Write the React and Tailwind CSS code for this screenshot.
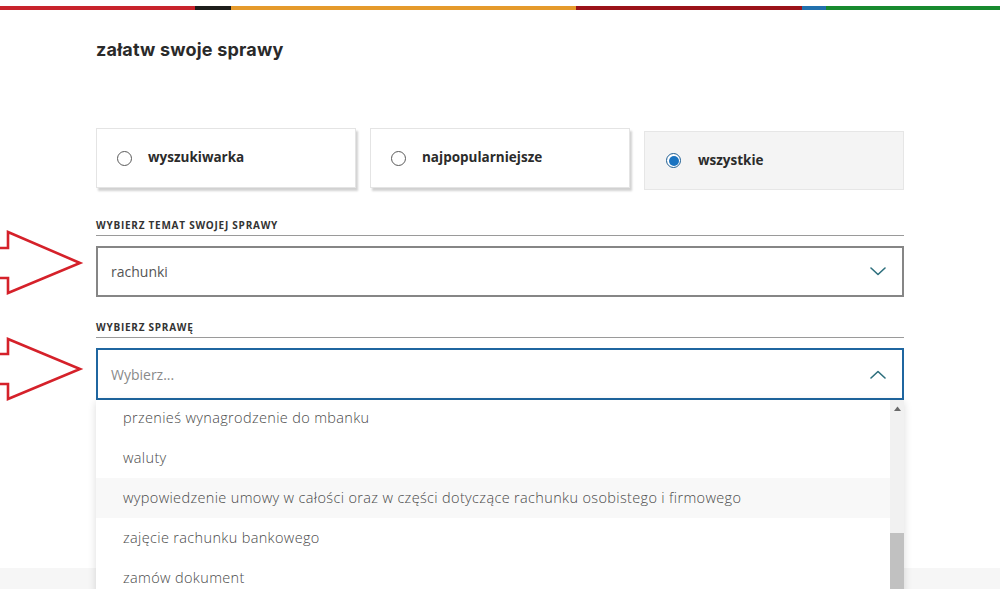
import React from "react";

function Radio({ checked }) {
  if (checked) {
    return (
      <span className="flex h-[15px] w-[15px] shrink-0 items-center justify-center rounded-full border-[1.5px] border-[#1d5d92] bg-white">
        <span className="h-[10px] w-[10px] rounded-full bg-[#1a73c0]" />
      </span>
    );
  }
  return <span className="h-[15px] w-[15px] shrink-0 rounded-full border-[1.5px] border-[#5a5a5a] bg-white" />;
}

function Chevron({ up }) {
  return (
    <svg width="16" height="9" viewBox="0 0 16 9" fill="none" className="shrink-0">
      <path
        d={up ? "M1 8 L8 1.5 L15 8" : "M1 1 L8 7.5 L15 1"}
        stroke="#2d6f7d"
        strokeWidth="1.6"
        strokeLinecap="round"
        strokeLinejoin="round"
      />
    </svg>
  );
}

function Arrow({ d }) {
  return (
    <path d={d} fill="none" stroke="#d5212a" strokeWidth="2.6" strokeLinejoin="miter" />
  );
}

const items = [
  "przenieś wynagrodzenie do mbanku",
  "waluty",
  "wypowiedzenie umowy w całości oraz w części dotyczące rachunku osobistego i firmowego",
  "zajęcie rachunku bankowego",
  "zamów dokument",
];

export default function App() {
  return (
    <div
      className="relative h-[589px] w-[1000px] overflow-hidden bg-white text-[#2b2b2b]"
      style={{ fontFamily: '"Open Sans", "Noto Sans", sans-serif' }}
    >
      {/* top colour bar */}
      <div className="mt-[6px] flex h-[4px] w-full">
        <div className="w-[195px] bg-[#c8232b]" />
        <div className="w-[36px] bg-[#1d1d1b]" />
        <div className="w-[345px] bg-[#e59a2b]" />
        <div className="w-[226px] bg-[#9b1219]" />
        <div className="w-[24px] bg-[#2170ad]" />
        <div className="flex-1 bg-[#178a2e]" />
      </div>

      <div className="px-[96px]">
        <h1
          className="mt-[28px] text-[18px] font-bold leading-6 tracking-[0.2px] text-[#2a2a2a]"
          style={{ fontFamily: "Inter, sans-serif" }}
        >
          załatw swoje sprawy
        </h1>

        {/* tabs */}
        <div className="mt-[66px] grid w-[808px] grid-cols-3 items-start gap-[14px]">
          <div className="flex h-[60px] items-center gap-[16px] border border-[#e4e4e4] bg-white pl-[20px] shadow-[2px_3px_2px_rgba(0,0,0,0.18)]">
            <Radio />
            <span className="-mt-[1px] text-[13.5px] font-bold text-[#2b2b2b]">wyszukiwarka</span>
          </div>
          <div className="flex h-[60px] items-center gap-[16px] border border-[#e4e4e4] bg-white pl-[20px] shadow-[2px_3px_2px_rgba(0,0,0,0.18)]">
            <Radio />
            <span className="-mt-[1px] text-[13.5px] font-bold text-[#2b2b2b]">najpopularniejsze</span>
          </div>
          <div className="mt-[3px] flex h-[59px] items-center gap-[17px] border border-[#e6e6e6] bg-[#f4f4f4] pl-[21px]">
            <Radio checked />
            <span className="text-[13.5px] font-bold text-[#2b2b2b]">wszystkie</span>
          </div>
        </div>

        {/* field 1 */}
        <div className="mt-[28px] w-[808px] border-b border-[#9a9a9a] pb-[3px] text-[10px] font-bold uppercase leading-[14px] tracking-[0.75px] text-[#333]">
          WYBIERZ TEMAT SWOJEJ SPRAWY
        </div>
        <div className="mt-[10px] flex h-[51px] w-[808px] items-center justify-between border-2 border-[#868686] bg-white pl-[13px] pr-[16px]">
          <span className="text-[14px] text-[#555]">rachunki</span>
          <Chevron />
        </div>

        {/* field 2 */}
        <div className="mt-[23px] w-[808px] border-b border-[#9a9a9a] pb-[3px] text-[10px] font-bold uppercase leading-[14px] tracking-[0.75px] text-[#333]">
          WYBIERZ SPRAWĘ
        </div>
        <div className="relative mt-[10px] w-[808px]">
          <div className="flex h-[52px] items-center justify-between border-2 border-[#1f66a0] bg-white pl-[13px] pr-[16px]">
            <span className="text-[14px] text-[#8a8a8a]">Wybierz...</span>
            <Chevron up />
          </div>

          {/* dropdown list */}
          <div className="absolute left-0 top-full z-10 flex h-[200px] w-[808px] bg-white shadow-[0_2px_8px_rgba(0,0,0,0.14)]">
            <div className="flex-1 overflow-hidden">
              <ul className="-mt-[2px]">
                {items.map((t, i) => (
                  <li
                    key={t}
                    className={
                      "flex h-[40px] items-center pl-[27px] text-[14.5px] font-light tracking-[0.35px] text-[#4a4a4a] " +
                      (i === 2 ? "bg-[#f8f8f8]" : "bg-white")
                    }
                  >
                    {t}
                  </li>
                ))}
              </ul>
            </div>
            <div className="flex w-[14px] flex-col bg-[#f1f1f1]">
              <div className="flex h-[16px] items-center justify-center">
                <svg width="7" height="5" viewBox="0 0 7 5">
                  <path d="M0 5 L3.5 0.5 L7 5 Z" fill="#6a6a6a" />
                </svg>
              </div>
              <div className="mt-[117px] flex-1 bg-[#c1c1c1]" />
            </div>
          </div>
        </div>
      </div>

      {/* bottom grey band */}
      <div className="mt-[168px] h-[40px] w-full bg-[#f6f6f6]" />

      {/* annotation arrows */}
      <svg className="pointer-events-none absolute left-0 top-0" width="100" height="420" viewBox="0 0 100 420">
        <Arrow d="M-4 248 L8 248 L8 232 L80 263 L8 293 L8 278 L-4 278" />
        <Arrow d="M-4 354 L8 354 L8 339 L80 369 L8 399 L8 384 L-4 384" />
      </svg>
    </div>
  );
}
